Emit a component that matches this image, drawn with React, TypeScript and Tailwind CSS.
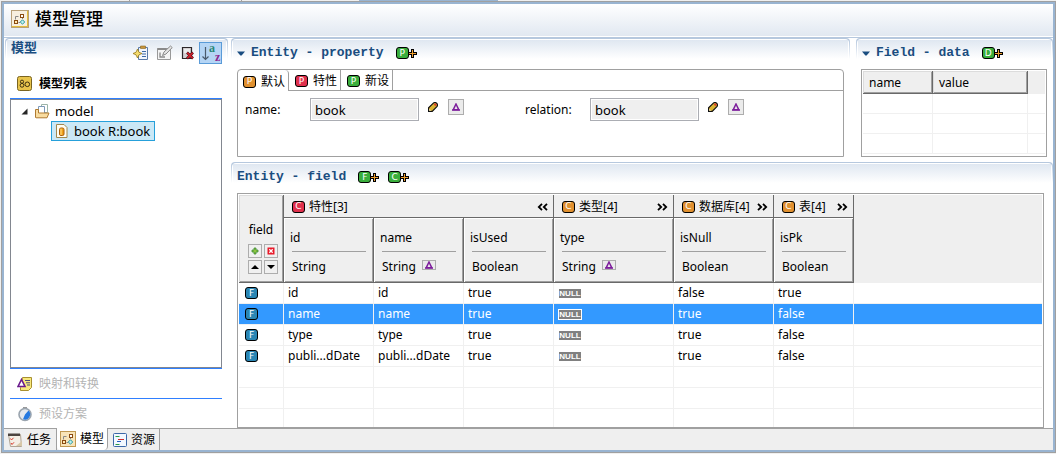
import React from "react";

const UI_FONT = "font-['Noto_Sans','Noto_Sans_CJK_SC',sans-serif]";
const TITLE_FONT = "font-['Liberation_Mono','Noto_Sans_CJK_SC',monospace]";

const BADGE = {
  orange: "bg-[#e0902f]",
  red: "bg-[#e0304c]",
  green: "bg-[#3aae3c]",
  blue: "bg-[#2a86b4]",
};

function Badge({ letter, tone }: { letter: string; tone: keyof typeof BADGE }) {
  return (
    <span
      className={`inline-flex h-3 w-[13px] shrink-0 items-center justify-center rounded-[3px] border border-black font-['DejaVu_Sans',sans-serif] text-[9px] leading-none text-white ${BADGE[tone]}`}
    >
      {letter}
    </span>
  );
}

function AddBadge({ letter, label }: { letter: string; label: string }) {
  return (
    <button type="button" aria-label={label} className="flex items-center">
      <Badge letter={letter} tone="green" />
      <svg className="-ml-px" width="9" height="9" viewBox="0 0 9 9" shapeRendering="crispEdges">
        <path d="M3 0h3v3h3v3H6v3H3V6H0V3h3z" fill="#000" />
        <path d="M4 1h1v3h3v1H5v3H4V5H1V4h3z" fill="#f0a030" />
      </svg>
    </button>
  );
}

function Delta() {
  return (
    <svg width="8" height="8" viewBox="0 0 8 8">
      <path d="M4 1 L6.8 6.8 H1.2 Z" fill="none" stroke="#7d1f9c" strokeWidth="1.5" />
      <path d="M0 7h8" stroke="#7d1f9c" strokeWidth="1.4" />
    </svg>
  );
}

function Pencil() {
  return (
    <svg width="10" height="10" viewBox="0 0 10 10">
      <path d="M.6 9.4V5.8L5.600 .9Q7 -.1 8.600 1.200 10 2.800 9.100 4.300L4.200 9.400Z" fill="#dcb432" stroke="#111" strokeWidth="1.2" />
      <path d="M5.700 2.600 7.300 1.100 8.900 2.700 7.400 4.300Z" fill="#d9452c" />
      <path d="M1.200 8.800V6.800l2 2z" fill="#f8ecc0" />
    </svg>
  );
}

function Caret() {
  return (
    <svg width="8" height="5" viewBox="0 0 8 5">
      <path d="M0 .5h8L4.6 4.5H3.4z" fill="#1a4d80" />
    </svg>
  );
}

function ModelIcon() {
  return (
    <svg width="18" height="18" viewBox="0 0 18 18">
      <rect x=".5" y=".5" width="17" height="17" fill="#f7efdf" stroke="#b8a078" />
      <path d="M1 16.500h16M16.500 1v16" stroke="#e3bc3e" />
      <path d="M4.500 9.500V6.500h3M11.500 8v1M7.500 12.500h2" stroke="#888" fill="none" />
      <rect x="9.500" y="4.500" width="3" height="3" fill="#fff" stroke="#8a4a10" />
      <rect x="3.500" y="10.500" width="3" height="3" fill="#ffe9b0" stroke="#8a4a10" />
      <path d="M11.500 9.800 13.700 12 11.500 14.200 9.300 12z" fill="#bff0f0" stroke="#2a9a9e" />
    </svg>
  );
}

function SectionHeader({ children, className = "" }: { children: React.ReactNode; className?: string }) {
  return (
    <div className="rounded-t bg-[linear-gradient(#b6c8de,#b6c8de_2px,#fff_21px)] px-px pt-px">
      <div className="rounded-t bg-white px-px pt-px">
        <div className={`flex h-7 items-center bg-[linear-gradient(#dfe7f1,#fff_19px)] pb-0.5 pl-1 ${className}`}>{children}</div>
      </div>
    </div>
  );
}

function SectionTitle({ children }: { children: React.ReactNode }) {
  return <h2 className={`${TITLE_FONT} text-[13px] leading-5 font-bold whitespace-nowrap text-[#1a4d80]`}>{children}</h2>;
}

function Field({ id, label, className }: { id: string; label: string; className: string }) {
  return (
    <div className={`flex items-start ${className}`}>
      <label htmlFor={id} className="w-[65px] pt-1 text-xs leading-4">
        {label}
      </label>
      <input
        id={id}
        readOnly
        defaultValue="book"
        className="h-[23px] w-[109px] border border-[#abadb3] bg-[#efefef] px-1 text-[13px] leading-5 shadow-[inset_0_0_0_1px_#fff] outline-none"
      />
      <button type="button" aria-label={`edit ${id}`} className="mt-1 ml-[9px]">
        <Pencil />
      </button>
      <button type="button" aria-label={`convert ${id}`} className="mt-px ml-[10px] flex h-4 w-4 items-center justify-center border border-[#adadad] bg-[#ebebeb]">
        <Delta />
      </button>
    </div>
  );
}

function Chevrons({ dir }: { dir: "left" | "right" }) {
  return (
    <svg width="11" height="8" viewBox="0 0 11 8" fill="none" stroke="#000" strokeWidth="1.8">
      {dir === "right" ? <path d="M1 .8 4.2 4 1 7.2M6 .8 9.2 4 6 7.2" /> : <path d="M5 .8 1.8 4 5 7.2M10 .8 6.8 4 10 7.2" />}
    </svg>
  );
}

function TinyButton({ label, children }: { label: string; children: React.ReactNode }) {
  return (
    <button type="button" aria-label={label} className="flex h-3.5 w-3.5 items-center justify-center border border-[#adadad] bg-[#f0f0f0]">
      <svg width="8" height="8" viewBox="0 0 8 8">
        {children}
      </svg>
    </button>
  );
}

const GROUPS = [
  { name: "特性[3]", tone: "red" as const, span: 3, dir: "left" as const },
  { name: "类型[4]", tone: "orange" as const, span: 1, dir: "right" as const },
  { name: "数据库[4]", tone: "orange" as const, span: 1, dir: "right" as const },
  { name: "表[4]", tone: "orange" as const, span: 1, dir: "right" as const },
];

const COLUMNS = [
  { name: "id", type: "String", convert: false },
  { name: "name", type: "String", convert: true },
  { name: "isUsed", type: "Boolean", convert: false },
  { name: "type", type: "String", convert: true },
  { name: "isNull", type: "Boolean", convert: false },
  { name: "isPk", type: "Boolean", convert: false },
];

const ROWS = [
  ["id", "id", "true", null, "false", "true"],
  ["name", "name", "true", null, "true", "false"],
  ["type", "type", "true", null, "true", "false"],
  ["publi...dDate", "publi...dDate", "true", null, "true", "false"],
];

const SELECTED_ROW = 1;

function FieldTable() {
  return (
    <table className="w-full table-fixed border-separate border-spacing-0 text-xs leading-4">
      <colgroup>
        <col className="w-[45px]" />
        <col className="w-[90px]" />
        <col className="w-[90px]" />
        <col className="w-[90px]" />
        <col className="w-[120px]" />
        <col className="w-[100px]" />
        <col className="w-[80px]" />
        <col />
      </colgroup>
      <thead className="bg-[#efefef]">
        <tr>
          <th rowSpan={2} className="border-r border-b border-[#696969] p-0 align-bottom font-normal shadow-[inset_1px_1px_0_#dcdcdc,inset_-1px_-1px_0_#a0a0a0]">
            <div className="flex flex-col items-center gap-[6px] pb-2">
              field
              <div className="grid grid-cols-2 gap-[2px] pl-1">
                <TinyButton label="add">
                  <path d="M3 1h2v2h2v2H5v2H3V5H1V3h2z" fill="#8cc540" stroke="#3d8a35" strokeWidth=".8" />
                </TinyButton>
                <TinyButton label="delete">
                  <path d="M.5.5h7v7h-7z" fill="#e81828" />
                  <path d="M2.3 2.3 5.7 5.7M5.7 2.3 2.3 5.7" stroke="#fff" strokeWidth="1.3" />
                </TinyButton>
                <TinyButton label="up">
                  <path d="M0 6h8L4 2z" fill="#000" />
                </TinyButton>
                <TinyButton label="down">
                  <path d="M0 2h8L4 6z" fill="#000" />
                </TinyButton>
              </div>
            </div>
          </th>
          {GROUPS.map((g) => (
            <th key={g.name} colSpan={g.span} className="h-[23px] border-r border-b border-[#696969] p-0 text-left font-normal">
              <div className="flex items-center pt-px pr-[5px] pl-2">
                <Badge letter="C" tone={g.tone} />
                <span className="ml-1 whitespace-nowrap">{g.name}</span>
                <button type="button" aria-label={`toggle ${g.name}`} className="ml-auto">
                  <Chevrons dir={g.dir} />
                </button>
              </div>
            </th>
          ))}
          <th rowSpan={2} className="p-0" />
        </tr>
        <tr>
          {COLUMNS.map((c) => (
            <th
              key={c.name}
              className="h-[65px] border-r border-b border-[#696969] p-0 text-left align-top font-normal shadow-[inset_1px_1px_0_#fff,inset_-1px_-1px_0_#a0a0a0]"
            >
              <div className="pt-3 pr-[7px] pl-[6px]">
                <div>{c.name}</div>
                <div className="mt-[5px] ml-0.5 flex h-[31px] items-center gap-[6px] border-t border-[#a0a0a0]">
                  {c.type}
                  {c.convert && (
                    <button type="button" aria-label={`convert ${c.name}`} className="mb-1 flex h-2.5 w-3.5 items-center justify-center border border-[#adadad] bg-[#ebebeb]">
                      <Delta />
                    </button>
                  )}
                </div>
              </div>
            </th>
          ))}
        </tr>
      </thead>
      <tbody>
        {[0, 1, 2, 3, 4, 5, 6].map((i) => {
          const row = ROWS[i];
          const selected = i === SELECTED_ROW;
          const last = i === 6;
          const cell = last
            ? "h-[18px] border-r border-[#f0f0f0] p-0"
            : "h-[21px] border-r border-b border-[#f0f0f0] p-0 pl-1 whitespace-nowrap";
          return (
            <tr key={i} className={selected ? "bg-[#3399ff] text-white" : ""}>
              <td className={cell}>
                {row && (
                  <div className="flex pl-0.5">
                    <Badge letter="F" tone="blue" />
                  </div>
                )}
              </td>
              {COLUMNS.map((c, j) => (
                <td key={c.name} className={cell}>
                  {row && row[j]}
                  {row && row[j] === null && (
                    <span
                      className={`flex w-6 items-center justify-center border bg-[#808080] font-['Liberation_Sans',sans-serif] text-[8px] leading-[9px] font-bold text-white ${selected ? "border-white" : "border-transparent bg-clip-padding"}`}
                    >
                      NULL
                    </span>
                  )}
                </td>
              ))}
              <td className={last ? "p-0" : "border-b border-[#f0f0f0] p-0"} />
            </tr>
          );
        })}
      </tbody>
    </table>
  );
}

function DataTable() {
  const head =
    "h-[23px] border-r border-b border-[#696969] bg-[#efefef] p-0 pt-0.5 pl-[6px] text-left font-normal shadow-[inset_1px_1px_0_#dcdcdc,inset_-1px_-1px_0_#a0a0a0]";
  return (
    <table className="w-full table-fixed border-separate border-spacing-0 text-xs leading-4">
      <colgroup>
        <col className="w-[70px]" />
        <col className="w-[95px]" />
        <col />
      </colgroup>
      <thead>
        <tr>
          <th className={head}>name</th>
          <th className={head}>value</th>
          <th className="bg-[#efefef] p-0" />
        </tr>
      </thead>
      <tbody>
        {[0, 1, 2].map((i) => (
          <tr key={i}>
            <td className="h-5 border-r border-b border-[#f0f0f0] p-0" />
            <td className="h-5 border-r border-b border-[#f0f0f0] p-0" />
            <td className="h-5 border-b border-[#f0f0f0] p-0" />
          </tr>
        ))}
      </tbody>
    </table>
  );
}

function Sidebar() {
  return (
    <aside className="ml-px flex w-[223px] shrink-0 flex-col">
      <SectionHeader>
        <h2 className="self-start text-[13px] leading-[15px] font-bold text-[#1a4d80]">模型</h2>
        <div className="mr-1 ml-auto flex items-center">
          <button type="button" aria-label="new model">
            <svg width="16" height="16" viewBox="0 0 16 16">
              <path d="M5.500 2.500h9v12h-9z" fill="#f2f6fc" stroke="#5a7aa8" />
              <path d="M7.500 1h5v2.500h-5z" fill="#c8963c" stroke="#8a6420" strokeWidth=".6" />
              <path d="M9 6.500h4M9 9h4M9 11.500h4" stroke="#3f6aa5" />
              <path d="M4.500 4 6 7.300 9 8.500 6 9.800 4.500 13 3 9.800 0 8.500 3 7.300z" fill="#f4dc70" stroke="#9a7a18" strokeWidth=".8" />
            </svg>
          </button>
          <button type="button" aria-label="edit model" className="ml-2">
            <svg width="16" height="16" viewBox="0 0 16 16">
              <path d="M.500 3.500h13v11H.500z" fill="#f4f4f4" stroke="#999" />
              <path d="M.500 4h9" stroke="#8a8a8a" strokeWidth="2" />
              <path d="M3 7.500v4.500h5" stroke="#888" fill="none" strokeWidth="1.300" />
              <path d="M5.500 10.500 7 7 13.500 1 15.200 2.600 9 9z" fill="#e6e6e6" stroke="#888" />
            </svg>
          </button>
          <button type="button" aria-label="delete model" className="ml-2">
            <svg width="14" height="16" viewBox="0 0 14 16">
              <path d="M1.500 2.500h9v11h-9z" fill="#d4d0d2" stroke="#2c2628" strokeWidth="1.200" />
              <path d="M3 4h6v4H3z" fill="#ececec" />
              <path d="M6 7.500 12 13.500M12 7.500 6 13.500" stroke="#50141a" strokeWidth="2.600" />
              <path d="M6.300 7.800 11.700 13.200M11.700 7.800 6.300 13.200" stroke="#d8202c" strokeWidth="1.500" />
            </svg>
          </button>
          <button type="button" aria-label="sort models" className="ml-1 flex h-[22px] w-[23px] border border-[#5a9bd8] bg-[#b5d5f5] font-['Liberation_Serif',serif] text-xs leading-[11px] font-bold">
            <svg width="9" height="20" viewBox="0 0 9 20">
              <path d="M5.500 4v12M2.500 13.500 5.500 16.500 8.500 13.500" fill="none" stroke="#4a5a6c" strokeWidth="1.200" />
            </svg>
            <span className="text-[#2a8878]">a</span>
            <span className="self-end text-[#8c2890]">z</span>
          </button>
        </div>
      </SectionHeader>
      <div className="flex flex-1 flex-col pt-px pr-[6px] pl-[5px]">
        <button type="button" className="flex h-[29px] items-center pl-[7px] text-xs font-bold">
          <svg width="15" height="15" viewBox="0 0 15 15" className="mr-[7px]">
            <rect x=".5" y=".5" width="14" height="14" rx="2" fill="#e8c44c" stroke="#7a6420" />
            <g fill="none" stroke="#3c3010">
              <circle cx="5" cy="5.700" r="1.600" />
              <circle cx="5" cy="9.300" r="1.900" />
              <circle cx="10.300" cy="8.300" r="2.300" />
            </g>
          </svg>
          模型列表
        </button>
        <ul className="mt-px flex-1 border border-[#828790] pt-px text-[13px] leading-5 shadow-[0_1px_0_#2f7fff,0_-1px_0_#2f7fff]">
          <li>
            <div className="flex h-5 items-center pl-2.5">
              <svg width="7" height="7" viewBox="0 0 7 7">
                <path d="M6.500.5v6h-6z" fill="#262626" />
              </svg>
              <svg width="16" height="15" viewBox="0 0 16 15" className="mr-[5px] ml-[6px]">
                <path d="M7.500.5h6v8h-6z" fill="#fff" stroke="#9cb4a8" />
                <path d="M4.500 2.500h6v8h-6z" fill="#fff" stroke="#7c98b8" />
                <path d="M1.500 13.500V5.500h3V9H15l-2 4.800H2z" fill="#f8dca0" stroke="#b07a30" />
              </svg>
              model
            </div>
            <ul>
              <li className="ml-10 flex h-5 w-[104px] items-center border border-[#26a0da] bg-[#cbe8f6] pl-1 whitespace-nowrap">
                <svg width="12" height="14" viewBox="0 0 12 14" className="mr-[6px] shrink-0">
                  <path d="M.500.500h7.500l3 3v10H.500z" fill="#fffdf2" stroke="#a08850" />
                  <rect x="3.500" y="4" width="4.500" height="7.500" rx="1.500" fill="#f0a018" stroke="#a85c08" />
                  <path d="M5 4.500v6.500" stroke="#ffe08a" />
                </svg>
                book R:book
              </li>
            </ul>
          </li>
        </ul>
        <button type="button" className="mt-px flex h-[30px] items-center border-b border-[#2f7fff] pl-[7px] text-xs text-[#b4b4b4]">
          <svg width="16" height="16" viewBox="0 0 16 16" className="mr-[6px]">
            <path d="M5.500 1.500h9v10l-3 3h-8v-3z" fill="#f8e87c" stroke="#a89030" />
            <path d="M8 4.500h5M9 6.800h4M10 9h3" stroke="#4a4a7a" />
            <path d="M4.500 3.500 8 10.500H1z" fill="#fff" stroke="#6a1a8c" strokeWidth="1.600" />
          </svg>
          映射和转换
        </button>
        <button type="button" className="flex h-[29px] items-center pl-[7px] text-xs text-[#b4b4b4]">
          <svg width="16" height="16" viewBox="0 0 16 16" className="mr-[6px]">
            <path d="M6 1h4v2H6z" fill="#999" />
            <circle cx="8" cy="8.500" r="6" fill="#e4e8ee" stroke="#9aa4ae" strokeWidth="1.600" />
            <path d="M8 8.500 11.500 4.500A5.300 5.300 0 0 1 6 13.300z" fill="#2478e0" />
          </svg>
          预设方案
        </button>
      </div>
    </aside>
  );
}

export default function App() {
  const tab = "flex items-center gap-[5px] border-r border-[#a0a0a0] pt-0.5 text-xs leading-4";
  const pageTab = "flex items-center gap-1 border-r border-[#a0a0a0] pl-[3px] text-xs leading-4 whitespace-nowrap";
  return (
    <div className={`flex min-h-screen flex-col bg-[#f0f0f0] pb-px pl-px text-black ${UI_FONT}`}>
      <div className="flex h-px">
        <div className="w-[129px] border-r border-[#a0a0a0]" />
        <div className="w-[112px] border-r border-[#a0a0a0]" />
        <div className="w-[117px]" />
        <div className="w-[139px] bg-[#99b4d1]" />
      </div>
      <div className="flex flex-1 flex-col border border-[#a0a0a0]">
        <div className="flex flex-1 flex-col border-2 border-[#99b4d1] bg-white">
          <header className="flex h-8 items-center bg-linear-to-b from-white to-[#e1e8f1] pb-0.5 pl-[7px]">
            <ModelIcon />
            <h1 className="ml-[6px] text-[17px] leading-6 font-medium">模型管理</h1>
          </header>
          <div className="h-0.5 border-b border-[#b6c8de] bg-white" />

          <main className="flex flex-1">
            <Sidebar />
            <div className="ml-[3px] flex min-w-0 flex-1 flex-col">
              <div className="flex gap-[6px]">
                <section className="min-w-0 flex-1">
                  <SectionHeader>
                    <Caret />
                    <span className="mr-3 ml-[6px]">
                      <SectionTitle>Entity - property</SectionTitle>
                    </span>
                    <AddBadge letter="P" label="add property" />
                  </SectionHeader>
                  <div className="mx-[6px] mt-px h-[88px] rounded-t border border-[#a0a0a0]">
                    <div className="flex h-[21px]" role="tablist">
                      <button type="button" role="tab" aria-selected="true" className={`${tab} w-[51px] rounded-tr pl-[5px]`}>
                        <Badge letter="P" tone="orange" />
                        默认
                      </button>
                      <button type="button" role="tab" className={`${tab} w-[52px] border-b pl-[6px]`}>
                        <Badge letter="P" tone="red" />
                        特性
                      </button>
                      <button type="button" role="tab" className={`${tab} w-[52px] border-b pl-[6px]`}>
                        <Badge letter="P" tone="green" />
                        新设
                      </button>
                      <div className="flex-1 border-b border-[#a0a0a0]" />
                    </div>
                    <div className="flex pt-[7px] pl-[7px]">
                      <Field id="name" label="name:" className="w-[280px]" />
                      <Field id="relation" label="relation:" className="" />
                    </div>
                  </div>
                </section>

                <section className="w-[197px] shrink-0">
                  <SectionHeader>
                    <Caret />
                    <span className="mr-3 ml-[6px]">
                      <SectionTitle>Field - data</SectionTitle>
                    </span>
                    <AddBadge letter="D" label="add data" />
                  </SectionHeader>
                  <div className="mt-px mr-[6px] ml-[5px] h-[88px] border border-[#a0a0a0] p-px">
                    <DataTable />
                  </div>
                </section>
              </div>

              <section className="mt-[5px] flex flex-1 flex-col">
                <SectionHeader>
                  <SectionTitle>Entity - field</SectionTitle>
                  <div className="ml-3 flex gap-[9px]">
                    <AddBadge letter="F" label="add field" />
                    <AddBadge letter="C" label="add column" />
                  </div>
                </SectionHeader>
                <div className="mt-px mr-[9px] ml-[6px] flex-1 border border-[#a0a0a0] px-px pt-px">
                  <FieldTable />
                </div>
              </section>
            </div>
          </main>

          <nav className="flex h-[22px] bg-[#efefef]">
            <button type="button" className={`${pageTab} w-[53px] border-t`}>
              <svg width="16" height="16" viewBox="0 0 16 16" className="shrink-0">
                <path d="M1.500 2.500h12l1 12h-11z" fill="#f4efe6" stroke="#b0a494" />
                <path d="M1 1.500h12v2.500H1z" fill="#4c4440" />
                <path d="M3.500 6.500 4.500 8 6.500 5.800M4 11 5 12.500 7 10.300" fill="none" stroke="#d83a2c" />
                <path d="M9 14 15 9v5z" fill="#d8c8a8" />
              </svg>
              任务
            </button>
            <button type="button" aria-current="page" className={`${pageTab} w-[51px] rounded-b bg-white`}>
              <svg width="16" height="16" viewBox="0 0 16 16" className="shrink-0">
                <rect x=".5" y=".5" width="15" height="15" fill="#f8e4b8" stroke="#c09850" />
                <path d="M3.500 8.500V5.500h3M10.500 7v1M6.500 11.500h2" stroke="#888" fill="none" />
                <rect x="9.500" y="3.500" width="3" height="3" fill="#fff" stroke="#8a4a10" />
                <rect x="2.500" y="9.500" width="3" height="3" fill="#ffe9b0" stroke="#8a4a10" />
                <path d="M10.500 8.800 12.700 11 10.500 13.200 8.300 11z" fill="#bff0f0" stroke="#2a9a9e" />
              </svg>
              模型
            </button>
            <button type="button" className={`${pageTab} w-[52px] border-t pl-[5px]`}>
              <svg width="14" height="14" viewBox="0 0 14 14" className="shrink-0">
                <rect x=".5" y=".5" width="13" height="13" rx="1" fill="#f2f8ff" stroke="#3c68a8" />
                <path d="M2.500 3.500h4" stroke="#2a9a48" />
                <path d="M5 6.500h6" stroke="#d02a2a" />
                <path d="M4 8.500h4" stroke="#2458c0" />
                <path d="M2.500 11.500h4" stroke="#2a9a48" />
              </svg>
              资源
            </button>
            <div className="flex-1 border-t border-[#a0a0a0]" />
          </nav>
        </div>
      </div>
    </div>
  );
}
